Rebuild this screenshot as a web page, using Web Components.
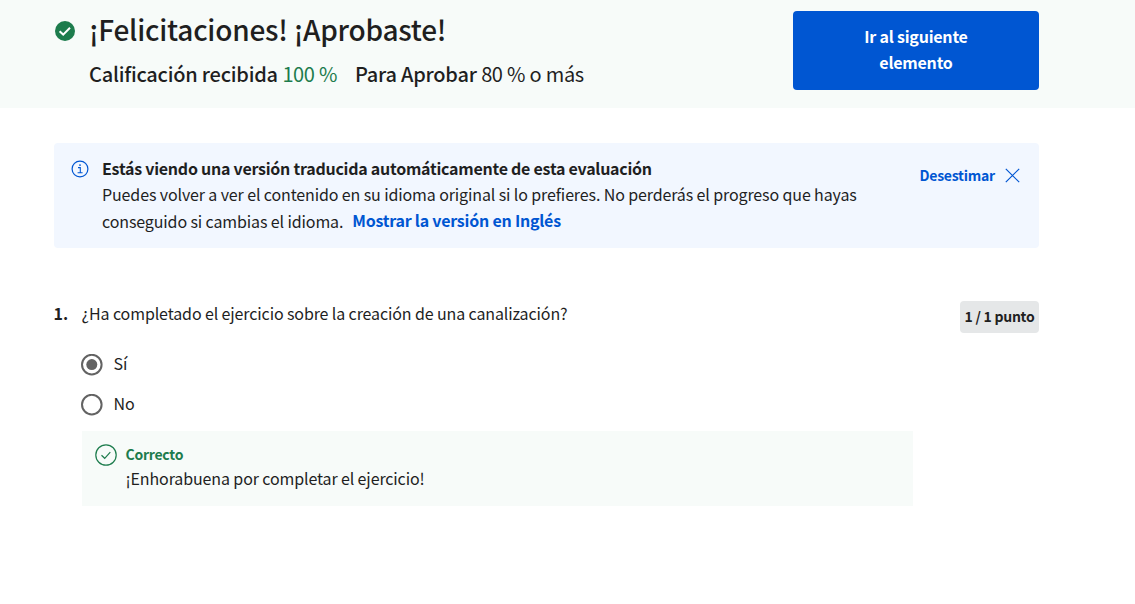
<!DOCTYPE html>
<html lang="es"><head><meta charset="utf-8"><title>Evaluación</title>
<style>
body{margin:0;background:#fff;color:#1f1f1f;font:16px/26px "Noto Sans CJK SC","Noto Sans CJK JP",sans-serif;letter-spacing:-.118px}
</style></head><body>
<quiz-page></quiz-page>
<script>
const define=(name,html)=>{
  const t=document.createElement('template');t.innerHTML=html;
  customElements.define(name,class extends HTMLElement{
    constructor(){super();this.attachShadow({mode:'open'}).append(t.content.cloneNode(true));}
  });
};
define('result-header',`<style>
:host{display:flex;box-sizing:border-box;height:108px;background:#f7fbf9;padding:11px 96px 0 54px;justify-content:space-between;align-items:flex-start}
.left{display:flex;gap:13px}
svg{display:block;margin-top:9px}
h1{margin:-2px 0 0;font-size:28px;line-height:40px;font-weight:500;white-space:nowrap;letter-spacing:-.24px}
.scores{display:flex;gap:18px;margin-top:11px;font-size:20px;line-height:28px;white-space:nowrap;letter-spacing:-.43px;word-spacing:.5px}
b{font-weight:500;letter-spacing:-.23px;word-spacing:0}.ok{color:#1d7c4d}
</style><div class="left"><svg width="22" height="22" viewBox="0 0 22 22"><circle cx="11" cy="11" r="10" fill="#1d7c4d"/><path d="M5.6 11.2L9.2 14.6L16 7.8" fill="none" stroke="#fff" stroke-width="2"/></svg>
<div><h1>¡Felicitaciones! ¡Aprobaste!</h1><div class="scores"><span><b>Calificación recibida</b> <span class="ok">100 %</span></span><span><b>Para Aprobar</b> 80 % o más</span></div></div></div><slot></slot>`);
define('primary-button',`<style>
:host{display:block}
button{display:block;box-sizing:border-box;width:246px;height:79px;border:0;border-radius:4px;background:#0056d2;color:#fff;font:700 16px/26px "Noto Sans CJK SC",sans-serif;letter-spacing:-.22px;padding:0 64px 4px}
</style><button><slot></slot></button>`);
define('translation-notice',`<style>
:host{display:flex;box-sizing:border-box;margin:35px 96px 0 54px;height:105px;background:#f2f7ff;border-radius:4px;padding:12px 18px 0 17px}
svg{display:block;flex:none;stroke:#0056d2;fill:none}
.info{margin:5px 13px 0 0}
.text{flex:1;white-space:nowrap}
.text>div{height:26px}
.last{display:flex;align-items:flex-start}
.last span{padding-top:1px}
b{letter-spacing:-.253px}
a{letter-spacing:-.23px}
b,a{font-weight:700}
a{color:#0056d2}
.text a{margin-left:9px}
.dismiss{display:flex;align-items:center;height:26px;margin-top:7px;gap:9px;color:#0056d2;font-size:14px}
</style>
<svg class="info" width="18" height="18" viewBox="0 0 18 18"><circle cx="9" cy="9" r="7.9" stroke-width="1.2"/><path d="M7 7.6h2.3v5M6.6 12.7h5" stroke-width="1.1"/><circle cx="9" cy="5.1" r=".9" fill="#0056d2" stroke="none"/></svg>
<div class="text"><div><b>Estás viendo una versión traducida automáticamente de esta evaluación</b></div><div>Puedes volver a ver el contenido en su idioma original si lo prefieres. No perderás el progreso que hayas</div><div class="last"><span>conseguido si cambias el idioma.</span><a>Mostrar la versión en Inglés</a></div></div>
<div class="dismiss"><a>Desestimar</a><svg width="17" height="16" viewBox="0 0 17 16"><path d="M1.8 1.8l13.4 13.4M15.2 1.8L1.8 15.2" stroke-width="1.2"/></svg></div>`);
define('radio-option',`<style>
:host{display:flex;align-items:center;height:40px;gap:10.6px}
svg{display:block;fill:none;stroke:#636363}
.dot{display:none;fill:#636363;stroke:none}
:host([checked]) .dot{display:block}
span{margin-top:-4px}
</style><svg width="22" height="22" viewBox="0 0 22 22"><circle cx="10.8" cy="10.6" r="9.8" stroke-width="2"/><circle class="dot" cx="10.8" cy="10.6" r="5.5"/></svg><span><slot></slot></span>`);
define('feedback-box',`<style>
:host{display:flex;box-sizing:border-box;width:831px;height:75px;margin:6px 0 0 1px;background:#f7fbf9;padding:13px;gap:8.5px}
svg{display:block;flex:none;fill:none;stroke:#1d7c4d}
.c{margin-top:-2px}
b{display:block;color:#1d7c4d;font-size:14px;line-height:24px;letter-spacing:-.25px}
p{margin:-1px 0 0;line-height:26px}
</style><svg width="22" height="22" viewBox="0 0 22 22"><circle cx="11" cy="11" r="10.2" stroke-width="1.2"/><path d="M6.5 11.2l3.2 3.1 5.6-6.1" stroke-width="1.2"/></svg><div class="c"><b>Correcto</b><p><slot></slot></p></div>`);
define('quiz-question',`<style>
:host{display:grid;grid-template-columns:27px 1fr auto;margin:53px 96px 0 54px;align-items:start}
.q{line-height:26px;margin-top:-1px}
b.q{margin-left:-.4px}
div.q{padding-left:.6px}
.points{box-sizing:border-box;width:79px;height:32px;border-radius:4px;background:#e5e7e8;text-align:center;font-weight:700;font-size:14px;line-height:30px;white-space:nowrap;letter-spacing:-.25px}
.body{grid-column:2/4;margin-top:12px}
</style><b class="q">1.</b><div class="q"><slot name="title"></slot></div><div class="points"><slot name="points"></slot></div><div class="body"><slot></slot></div>`);
define('quiz-page',`<style>:host{display:block}</style>
<result-header><primary-button>Ir al siguiente elemento</primary-button></result-header>
<translation-notice></translation-notice>
<quiz-question><span slot="title">¿Ha completado el ejercicio sobre la creación de una canalización?</span><span slot="points">1 / 1 punto</span><radio-option checked>Sí</radio-option><radio-option>No</radio-option><feedback-box>¡Enhorabuena por completar el ejercicio!</feedback-box></quiz-question>`);
</script></body></html>
